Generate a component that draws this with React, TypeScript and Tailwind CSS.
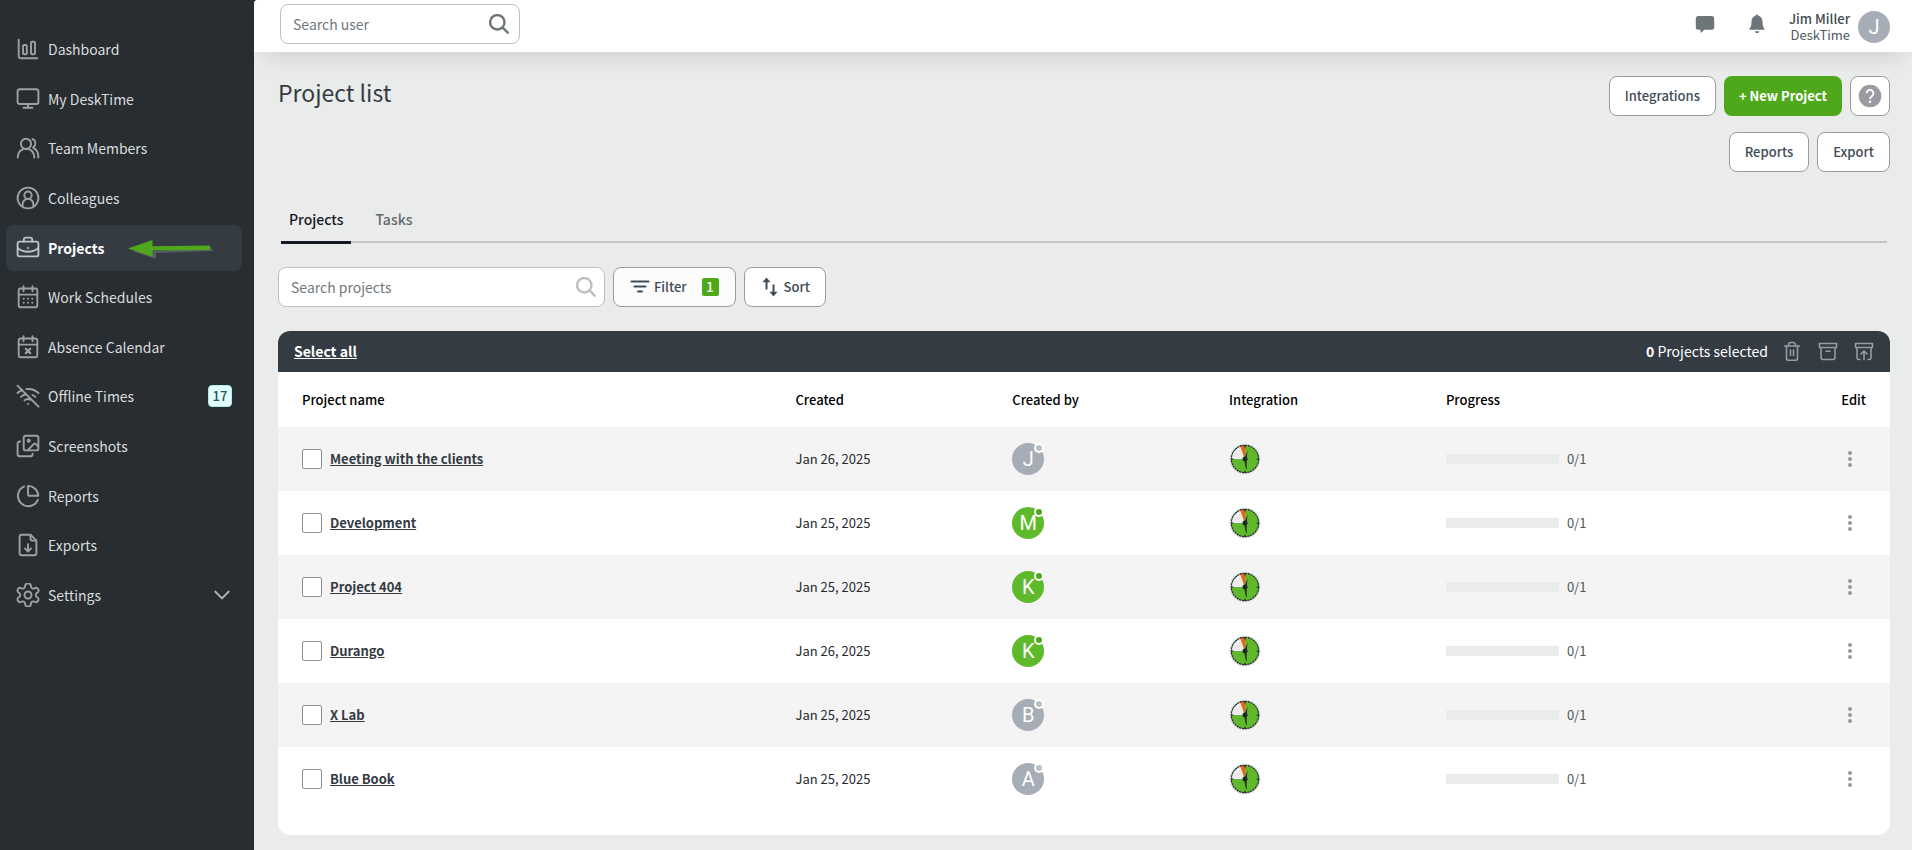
import type { ReactNode } from 'react'

type IconProps = { children: ReactNode; className?: string }

const Icon = ({ children, className = 'size-6' }: IconProps) => (
    <svg
        viewBox="0 0 24 24"
        fill="none"
        stroke="currentColor"
        strokeWidth={1.9}
        strokeLinecap="round"
        strokeLinejoin="round"
        aria-hidden="true"
        className={`shrink-0 ${className}`}
    >
        {children}
    </svg>
)

const calendarFrame = (
    <>
        <rect x="2.7" y="3.5" width="18.6" height="18.7" rx="2" />
        <path d="M2.7 9.6h18.6M7.5 1.3v4.9M16.5 1.3v4.9" />
    </>
)

const navItems: { label: string; icon: ReactNode; badge?: number; active?: boolean; expandable?: boolean }[] = [
    {
        label: 'Dashboard',
        icon: (
            <>
                <path d="M2.7 2.8v16.4a2 2 0 0 0 2 2h16.6" />
                <rect x="7" y="8" width="3.8" height="9.2" rx="1" />
                <rect x="15" y="4.8" width="4" height="12.4" rx="1" />
            </>
        ),
    },
    {
        label: 'My DeskTime',
        icon: (
            <>
                <rect x="1.6" y="2.3" width="20.8" height="14.7" rx="2" />
                <path d="M12 17v3.7M7.5 20.8h9" />
            </>
        ),
    },
    {
        label: 'Team Members',
        icon: (
            <>
                <circle cx="10" cy="7.9" r="5.1" />
                <path d="M1.7 21.5v-.6a8.3 8.3 0 0 1 16.6 0v.6" />
                <path d="M16.4 3c3.4 1.3 4.3 5.3.7 8.7M17.6 12.2c3.2 1.5 4.8 4.5 4.8 9.3" />
            </>
        ),
    },
    {
        label: 'Colleagues',
        icon: (
            <>
                <circle cx="12" cy="12" r="10.4" />
                <circle cx="12" cy="9.2" r="3.7" />
                <path d="M6.6 20.3v-2a5.4 5.4 0 0 1 10.8 0v2" />
            </>
        ),
    },
    {
        label: 'Projects',
        active: true,
        icon: (
            <>
                <rect x="1.6" y="5.6" width="20.8" height="14.8" rx="2" />
                <path d="M7.8 5.6V3.6a2 2 0 0 1 2-2h4.4a2 2 0 0 1 2 2v2M1.8 12.3c6 4.6 14.4 4.6 20.4 0" />
                <circle cx="12" cy="12" r=".3" />
            </>
        ),
    },
    {
        label: 'Work Schedules',
        icon: (
            <>
                {calendarFrame}
                <path d="M7.7 13.7h.01M12 13.7h.01M16.3 13.7h.01M7.7 17.7h.01M12 17.7h.01M16.3 17.7h.01" strokeWidth={2} />
            </>
        ),
    },
    {
        label: 'Absence Calendar',
        icon: (
            <>
                {calendarFrame}
                <path d="m9.8 13.7 4.4 4.4M14.2 13.7l-4.4 4.4" strokeWidth={2.2} />
            </>
        ),
    },
    {
        label: 'Offline Times',
        badge: 17,
        icon: (
            <>
                <path d="M12 20h.01M8.5 16.4a5 5 0 0 1 6-.6M5 12.9a10 10 0 0 1 5.2-2.7M19.3 12.9a10 10 0 0 0-2.8-1.9M1.5 9a15 15 0 0 1 4.7-2.9M22.5 9a15 15 0 0 0-12.3-3.9" />
                <path d="m1.5 1.7 21 21" />
            </>
        ),
    },
    {
        label: 'Screenshots',
        icon: (
            <>
                <rect x="7.7" y="1.7" width="14.7" height="14.7" rx="2" />
                <circle cx="12.7" cy="6.7" r="1.1" />
                <path d="m12 16 5.8-6.2a1.200 1.200 0 0 1 1.7 0l2.7 2.7" />
                <path d="M4.2 7.5h-.6a2 2 0 0 0-2 2v10.8a2 2 0 0 0 2 2h11a2 2 0 0 0 2-2v-.5" />
            </>
        ),
    },
    {
        label: 'Reports',
        icon: (
            <>
                <path d="M12 2v8.700a1 1 0 0 0 1 1h9.300A10.200 10.200 0 0 0 12 1.900Z" />
                <path d="M8.200 2.400A10.300 10.300 0 1 0 21.800 15.800" />
            </>
        ),
    },
    {
        label: 'Exports',
        icon: (
            <>
                <path d="M14.5 1.7H5.600a2 2 0 0 0-2 2v16.600a2 2 0 0 0 2 2h12.800a2 2 0 0 0 2-2V7.600Z" />
                <path d="M14.5 1.900v3.700a2 2 0 0 0 2 2h3.700M12 11.300v7M8.900 15.400l3.100 3.100 3.100-3.100" />
            </>
        ),
    },
    {
        label: 'Settings',
        expandable: true,
        icon: (
            <>
                <path d="M9.1 3.300a2.900 2.900 0 0 1 5.800 0 2.500 2.500 0 0 0 3.700 2 2.500 2.500 0 0 1 2.700 4.400 2.500 2.500 0 0 0 0 4.600 2.500 2.500 0 0 1-2.700 4.400 2.500 2.500 0 0 0-3.700 2 2.900 2.900 0 0 1-5.800 0 2.500 2.500 0 0 0-3.700-2 2.500 2.500 0 0 1-2.700-4.400 2.500 2.500 0 0 0 0-4.600 2.500 2.500 0 0 1 2.700-4.400 2.500 2.500 0 0 0 3.700-2Z" />
                <circle cx="12" cy="12" r="3.500" />
            </>
        ),
    },
]

const projects = [
    { name: 'Meeting with the clients', created: 'Jan 26, 2025', initial: 'J', online: false },
    { name: 'Development', created: 'Jan 25, 2025', initial: 'M', online: true },
    { name: 'Project 404', created: 'Jan 25, 2025', initial: 'K', online: true },
    { name: 'Durango', created: 'Jan 26, 2025', initial: 'K', online: true },
    { name: 'X Lab', created: 'Jan 25, 2025', initial: 'B', online: false },
    { name: 'Blue Book', created: 'Jan 25, 2025', initial: 'A', online: false },
]

const outlineButton =
    'flex h-10 items-center rounded-lg border border-[#999ba0] bg-white text-[13px] font-medium text-[#414c55]'

const Sidebar = () => (
    <aside className="w-[254px] shrink-0 bg-[#282d31] pt-[26px] pr-3 pl-1.5">
        <nav>
            <ul className="flex h-[592px] flex-col justify-between">
                {navItems.map(({ label, icon, badge, active, expandable }) => (
                    <li key={label}>
                        <a
                            href="#"
                            className={`flex h-[46px] items-center gap-2 rounded-lg px-2.5 text-sm ${
                                active ? 'bg-[#343b43] font-bold text-white' : 'text-[#dadcdd]'
                            }`}
                        >
                            <Icon className={`size-6 ${active ? 'text-[#bfc3c6]' : 'text-[#9da1a5]'}`}>{icon}</Icon>
                            {label}
                            {active && (
                                <svg viewBox="0 0 88 24" className="ml-4 h-6 w-[88px]" aria-hidden="true">
                                    <path d="m4 15 24 8v-6l57-2-2-4-55 4Z" fill="#80848a" opacity=".45" />
                                    <path d="M0 12.500 24.500 4v6.300L82 9.500v4.600l-57.500.3v6.300Z" fill="#4fa81c" />
                                </svg>
                            )}
                            {badge && (
                                <span className="ml-auto flex h-[22px] w-6 items-center justify-center rounded border border-[#a8eceb] bg-[#e2fdfc] text-[13px] font-medium text-[#1d5a5c]">
                                    {badge}
                                </span>
                            )}
                            {expandable && (
                                <Icon className="ml-auto size-5 text-[#b5b8bb]">
                                    <path d="m4 8 8 8 8-8" strokeWidth={2.4} />
                                </Icon>
                            )}
                        </a>
                    </li>
                ))}
            </ul>
        </nav>
    </aside>
)

const Search = ({ className }: { className: string }) => (
    <svg viewBox="0 0 20 20" fill="none" stroke="currentColor" strokeWidth={2.4} strokeLinecap="round" className={className} aria-hidden="true">
        <circle cx="8.3" cy="8.3" r="7.2" />
        <path d="m13.700 13.700 5 5" />
    </svg>
)

const TopBar = () => (
    <header className="flex h-[52px] items-center justify-between rounded-tl bg-white pr-[22px] pl-[26px] shadow-[0_14px_22px_-10px_rgba(0,0,0,0.13)]">
        <div className="mb-1 flex h-10 w-60 items-center rounded-lg border border-[#bcc0c3] pr-2.5 pl-3">
            <input
                type="text"
                aria-label="Search user"
                placeholder="Search user"
                className="min-w-0 flex-1 text-sm text-[#343b43] outline-none placeholder:text-[#71797d]"
            />
            <button type="button" aria-label="Search">
                <Search className="size-5 text-[#6c7578]" />
            </button>
        </div>
        <div className="flex items-center pt-0.5">
            <button type="button" aria-label="Messages" className="mr-8 mb-1.5 text-[#6c7578]">
                <svg viewBox="0 0 20 20" className="size-5" fill="currentColor" aria-hidden="true">
                    <path d="M3.300 2h13.400A2.500 2.500 0 0 1 19.200 4.500v8.800a2.500 2.500 0 0 1-2.500 2.500H9.500L5.500 19v-3.200H3.300A2.500 2.500 0 0 1 .8 13.300V4.500A2.500 2.500 0 0 1 3.300 2Z" />
                </svg>
            </button>
            <button type="button" aria-label="Notifications" className="mr-[22px] mb-1.5 text-[#6c7578]">
                <svg viewBox="0 0 20 20" className="size-5" fill="currentColor" aria-hidden="true">
                    <path d="M10 .5c.8 0 1.300.6 1.300 1.300 2.600.7 4.200 2.900 4.200 5.700 0 4 .6 5.500 2 7.200v1.100H2.500v-1.100c1.400-1.700 2-3.200 2-7.200 0-2.800 1.600-5 4.200-5.700C8.700 1.100 9.200.5 10 .5ZM7.900 17.200h4.200a2.100 2.100 0 0 1-4.200 0Z" />
                </svg>
            </button>
            <div className="text-right text-[13px] leading-4 text-[#50585e]">
                <div className="font-medium text-[#414a51]">Jim Miller</div>
                <div>DeskTime</div>
            </div>
            <span className="ml-2 flex size-8 items-center justify-center rounded-full bg-[#a7adb6] font-[Roboto,sans-serif] text-xl text-white">
                J
            </span>
        </div>
    </header>
)

const PageHeading = () => (
    <div className="flex items-start justify-between">
        <h1 className="text-[23px] leading-8 text-[#343b43]">Project list</h1>
        <div className="flex w-[300px] flex-wrap justify-end gap-x-2 gap-y-4">
            <button type="button" className={`${outlineButton} px-[15px]`}>Integrations</button>
            <button type="button" className="h-10 rounded-lg bg-[#4fa81c] px-[15px] text-[13px] font-bold text-white">
                + New Project
            </button>
            <button type="button" aria-label="Help" className={`${outlineButton} w-10 justify-center`}>
                <svg viewBox="0 0 24 24" className="size-6" fill="none" aria-hidden="true">
                    <circle cx="12" cy="12" r="11.3" fill="#999ba0" />
                    <path d="M8.600 9.300a3.400 3.400 0 1 1 5.700 2.500c-1.300 1.100-2.300 1.600-2.300 3.100" stroke="#fff" strokeWidth={1.8} />
                    <circle cx="12" cy="17.7" r="1.2" fill="#fff" />
                </svg>
            </button>
            <button type="button" className={`${outlineButton} px-[15px]`}>Reports</button>
            <button type="button" className={`${outlineButton} px-[15px]`}>Export</button>
        </div>
    </div>
)

const Tabs = () => (
    <div className="mx-[3px] mt-6 flex h-[47px] items-start gap-4 border-b-2 border-[#c2c4ca] text-sm font-medium">
        <a href="#" className="h-12 border-b-[3px] border-[#171a26] px-2 leading-[47px] text-[#171a26]">
            Projects
        </a>
        <a href="#" className="px-2 leading-[47px] text-[#62676d]">Tasks</a>
    </div>
)

const Toolbar = () => (
    <div className="mt-6 flex gap-2">
        <div className="flex h-10 w-[327px] items-center rounded-lg border border-[#bcc0c3] bg-white pr-2 pl-3">
            <input
                type="text"
                aria-label="Search projects"
                placeholder="Search projects"
                className="min-w-0 flex-1 text-sm text-[#343b43] outline-none placeholder:text-[#71797d]"
            />
            <button type="button" aria-label="Search projects">
                <Search className="size-5 text-[#bcc0c3]" />
            </button>
        </div>
        <button type="button" className="flex h-10 items-center rounded-lg border border-[#999ba0] bg-[#fbfbfb] px-4 text-[13px] font-medium text-[#414c55]">
            <svg viewBox="0 0 20 20" className="mr-1 size-5" stroke="currentColor" strokeWidth={2} strokeLinecap="round" aria-hidden="true">
                <path d="M1.500 4.500h17M4.500 9.500h11M8 14.500h4" />
            </svg>
            Filter
            <span className="ml-[15px] h-[18px] w-[17px] rounded-xs bg-[#4fa81c] text-center leading-[18px] text-white">1</span>
        </button>
        <button type="button" className={`${outlineButton} px-[15px]`}>
            <svg viewBox="0 0 20 20" className="mr-1 size-5" fill="none" stroke="currentColor" strokeWidth={2} aria-hidden="true">
                <path d="M6.500 12.500V3M13.500 7.500V17" />
                <path d="m6.500.6 4 4.700h-8ZM13.500 19.400l-4-4.700h8Z" fill="currentColor" stroke="none" />
            </svg>
            Sort
        </button>
    </div>
)

const Clock = () => (
    <svg viewBox="0 0 32 32" className="size-8" role="img" aria-label="DeskTime">
        <circle cx="16" cy="16" r="15.5" fill="#e1e2e2" />
        <circle cx="16" cy="16" r="13.5" fill="#5fba2b" />
        <path d="M16 16H2.500A13.500 13.500 0 0 1 11.400 3.300Z" fill="#ececec" />
        <path d="M16 16 11.400 3.300A13.500 13.500 0 0 1 16 2.500Z" fill="#fb5a1c" />
        <circle cx="16" cy="16" r="13.7" fill="none" stroke="#22282a" strokeWidth="1.2" strokeDasharray="2.200 .6" />
        <path d="M16 2v2.500M16 27.500V30M2 16h2.500M27.500 16H30" stroke="#22282a" strokeWidth="1.2" />
        <path d="m15 16 3.700-8.500L17.500 16l.3 10h-.8Z" fill="#22282a" />
        <circle cx="16" cy="16" r="2.5" fill="#22282a" />
    </svg>
)

const ProjectTable = () => (
    <section className="mt-6 overflow-hidden rounded-xl bg-white pb-6">
        <div className="flex h-[41px] items-center justify-between bg-[#343b43] pr-3.5 pb-0.5 pl-4 text-sm text-white">
            <button type="button" className="font-bold underline">Select all</button>
            <div className="flex items-center gap-3 text-[#999da2]">
                <span className="text-white">
                    <b>0</b> Projects selected
                </span>
                <button type="button" aria-label="Delete">
                    <Icon>
                        <path d="M4.500 7h15M6.500 7.500v11.700a2 2 0 0 0 2 2h7a2 2 0 0 0 2-2V7.500M8.500 6.800V6a2.500 2.500 0 0 1 2.500-2.500h2A2.500 2.500 0 0 1 15.500 6v.8M10.500 11v5.500M13.500 11v5.500" strokeWidth={1.6} />
                    </Icon>
                </button>
                <button type="button" aria-label="Archive">
                    <Icon>
                        <path d="M3.500 4.500h17v4h-17ZM5 8.800v9.700a2 2 0 0 0 2 2h10a2 2 0 0 0 2-2V8.800M10 12.200h4" strokeWidth={1.6} />
                    </Icon>
                </button>
                <button type="button" aria-label="Restore">
                    <Icon>
                        <path d="M3.500 4.500h17v4h-17ZM5 8.800v9.700a2 2 0 0 0 2 2h1M16 20.500h1a2 2 0 0 0 2-2V8.800M12 20.500v-8M9 15l3-3 3 3" strokeWidth={1.6} />
                    </Icon>
                </button>
            </div>
        </div>
        <table className="w-full table-fixed text-left text-[13px] text-[#262a2e]">
            <thead className="text-black">
                <tr className="h-[55px] *:font-medium">
                    <th className="w-[32.1%] pl-6">Project name</th>
                    <th className="w-[13.45%]">Created</th>
                    <th className="w-[13.45%]">Created by</th>
                    <th className="w-[13.45%]">Integration</th>
                    <th>Progress</th>
                    <th className="w-20 pr-6 text-right">Edit</th>
                </tr>
            </thead>
            <tbody>
                {projects.map(({ name, created, initial, online }) => (
                    <tr key={name} className="h-16 odd:bg-[#f4f4f4]">
                        <td className="pl-6">
                            <div className="flex items-center gap-2">
                                <input
                                    type="checkbox"
                                    aria-label={`Select ${name}`}
                                    className="size-5 appearance-none rounded-xs border border-[#8d9196] bg-white checked:bg-[#4fa81c]"
                                />
                                <a href="#" className="font-bold text-[#343b43] underline">{name}</a>
                            </div>
                        </td>
                        <td>{created}</td>
                        <td>
                            <div
                                className={`relative flex size-8 items-center justify-center rounded-full font-[Roboto,sans-serif] text-xl text-white ${
                                    online ? 'bg-[#5fba2b]' : 'bg-[#a7adb6]'
                                }`}
                            >
                                {initial}
                                <span
                                    className={`absolute top-0 right-0 size-2.5 rounded-full border-2 border-white ${
                                        online ? 'bg-[#4fa81c]' : 'bg-[#bcc0c3]'
                                    }`}
                                />
                            </div>
                        </td>
                        <td><Clock /></td>
                        <td>
                            <div className="flex items-center gap-2 text-[#50585e]">
                                <div className="h-2.5 w-[113px] bg-[#eaecec]" />
                                0/1
                            </div>
                        </td>
                        <td className="pr-6">
                            <button type="button" aria-label={`Edit ${name}`} className="ml-auto flex size-8 items-center justify-center text-[#97999d]">
                                <svg viewBox="0 0 20 20" className="size-5" fill="currentColor" aria-hidden="true">
                                    <circle cx="10" cy="4" r="2" />
                                    <circle cx="10" cy="10" r="2" />
                                    <circle cx="10" cy="16" r="2" />
                                </svg>
                            </button>
                        </td>
                    </tr>
                ))}
            </tbody>
        </table>
    </section>
)

const App = () => (
    <div className="flex min-h-screen bg-[#282d31] font-['Noto_Sans_CJK_SC',sans-serif]">
        <Sidebar />
        <div className="min-w-0 flex-1 rounded-tl bg-[#eaecec]">
            <TopBar />
            <main className="pt-6 pr-[22px] pb-[15px] pl-6">
                <PageHeading />
                <Tabs />
                <Toolbar />
                <ProjectTable />
            </main>
        </div>
    </div>
)

export default App
